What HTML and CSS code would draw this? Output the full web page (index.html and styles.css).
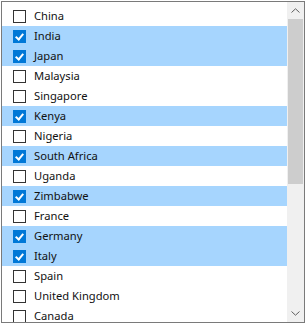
FILE: index.html
```html
<!DOCTYPE html>
<html>
<head>
    <title>Countries</title>
    <link rel="stylesheet" href="styles.css">
</head>
<body>
    <div class="listbox">
        <div class="items">
            <div class="item"><span class="check"></span><span class="label">China</span></div>
            <div class="item selected"><span class="check"></span><span class="label">India</span></div>
            <div class="item selected"><span class="check"></span><span class="label">Japan</span></div>
            <div class="item"><span class="check"></span><span class="label">Malaysia</span></div>
            <div class="item"><span class="check"></span><span class="label">Singapore</span></div>
            <div class="item selected"><span class="check"></span><span class="label">Kenya</span></div>
            <div class="item"><span class="check"></span><span class="label">Nigeria</span></div>
            <div class="item selected"><span class="check"></span><span class="label">South Africa</span></div>
            <div class="item"><span class="check"></span><span class="label">Uganda</span></div>
            <div class="item selected"><span class="check"></span><span class="label">Zimbabwe</span></div>
            <div class="item"><span class="check"></span><span class="label">France</span></div>
            <div class="item selected"><span class="check"></span><span class="label">Germany</span></div>
            <div class="item selected"><span class="check"></span><span class="label">Italy</span></div>
            <div class="item"><span class="check"></span><span class="label">Spain</span></div>
            <div class="item"><span class="check"></span><span class="label">United Kingdom</span></div>
            <div class="item"><span class="check"></span><span class="label">Canada</span></div>
        </div>
        <div class="scrollbar">
            <div class="arrow">
                <svg width="9" height="5" viewBox="0 0 9 5"><path d="M0.5 4.5 L4.5 0.8 L8.5 4.5" fill="none" stroke="#606060" stroke-width="1"/></svg>
            </div>
            <div class="track">
                <div class="thumb"></div>
            </div>
            <div class="arrow">
                <svg width="9" height="5" viewBox="0 0 9 5"><path d="M0.5 0.5 L4.5 4.2 L8.5 0.5" fill="none" stroke="#606060" stroke-width="1"/></svg>
            </div>
        </div>
    </div>
</body>
</html>
```

FILE: styles.css
```css
body {
    margin: 0;
    background-color: #fff;
    font-family: 'Noto Sans', 'Open Sans', sans-serif;
    font-size: 11.2px;
    color: #111;
}

.listbox {
    display: flex;
    width: 302px;
    height: 320px;
    margin: 1px 0 0 1px;
    border: 1px solid #7a7a7a;
    background-color: #fff;
    overflow: hidden;
}

.items {
    flex: 1;
    padding-top: 4px;
    overflow: hidden;
}

.item {
    display: flex;
    align-items: center;
    height: 20px;
    padding-left: 11px;
    white-space: nowrap;
}

.item.selected {
    background-color: #a6d5fe;
}

.label {
    margin-top: -1px;
}

.check {
    width: 11px;
    height: 11px;
    margin-right: 8px;
    border: 1px solid #333;
    background-color: #fff;
    flex-shrink: 0;
    position: relative;
}

.selected .check {
    border-color: #0078d7;
    background-color: #0078d7;
}

.selected .check::after {
    content: "";
    position: absolute;
    left: 3px;
    top: 1px;
    width: 3px;
    height: 6px;
    border: solid #fff;
    border-width: 0 2px 2px 0;
    transform: rotate(40deg);
}

.scrollbar {
    display: flex;
    flex-direction: column;
    width: 17px;
    background-color: #f0f0f0;
}

.arrow {
    height: 17px;
    display: flex;
    align-items: center;
    justify-content: center;
}

.track {
    flex: 1;
}

.thumb {
    height: 165px;
    margin: 0 1px;
    background-color: #cdcdcd;
}
```
